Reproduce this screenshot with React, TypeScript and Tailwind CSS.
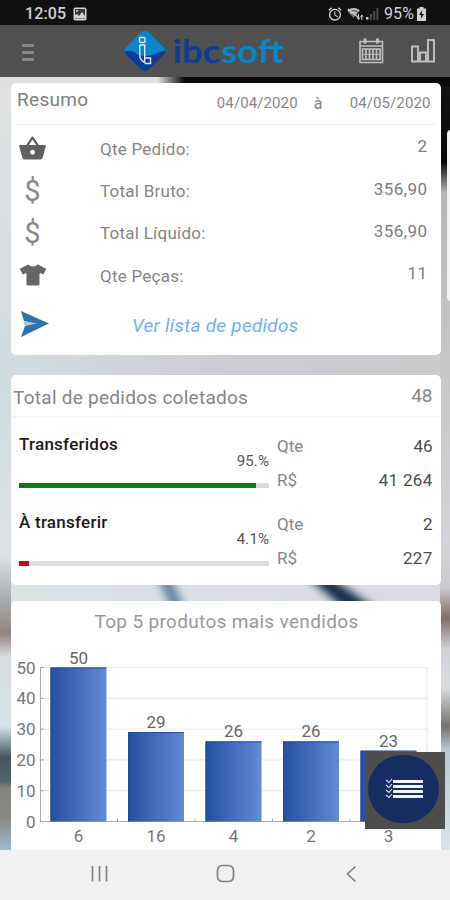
import type { ReactNode } from "react";
import { MdAlarm, MdShoppingBasket } from "react-icons/md";
import { FaTshirt } from "react-icons/fa";

interface SummaryItem { label: string; value: string; icon: ReactNode }
interface Transfer { title: string; pct: string; qty: string; amount: string; width: number; color: string }
interface Product { code: string; count: number }

const DOLLAR = (
  <span className="pt-[2px] text-[29px] leading-none text-[#8a8a8a]">$</span>
);

const SUMMARY: SummaryItem[] = [
  { label: "Qte Pedido:", value: "2", icon: <MdShoppingBasket size={29} color="#606060" /> },
  { label: "Total Bruto:", value: "356,90", icon: DOLLAR },
  { label: "Total Líquido:", value: "356,90", icon: DOLLAR },
  { label: "Qte Peças:", value: "11", icon: <FaTshirt size={26} color="#666" /> },
];

const TRANSFERS: Transfer[] = [
  { title: "Transferidos", pct: "95.%", qty: "46", amount: "41 264", width: 94.6, color: "#0a7d0a" },
  { title: "À transferir", pct: "4.1%", qty: "2", amount: "227", width: 4.1, color: "#b80f0f" },
];

const PRODUCTS: Product[] = [
  { code: "6", count: 50 },
  { code: "16", count: 29 },
  { code: "4", count: 26 },
  { code: "2", count: 26 },
  { code: "3", count: 23 },
];

function StatusBar() {
  return (
    <div className="flex h-[25px] shrink-0 items-center bg-[#111] pl-[25px] pr-[24px] text-[#d2d2d2]">
      <span className="pt-[3px] text-[16px] leading-none font-medium tracking-[0.1px]">12:05</span>
      <svg className="ml-[7px] mt-[2px]" width="14" height="14" viewBox="0 0 14 14">
        <rect x="0.5" y="0.5" width="13" height="13" rx="2" fill="#d2d2d2" />
        <rect x="2" y="2" width="10" height="10" fill="#3a3a3a" />
        <path d="M2 11.500V8l2-1 2 2 3-4 3 4v2.500z" fill="#d2d2d2" />
        <rect x="3" y="3" width="2" height="1.500" fill="#d2d2d2" />
      </svg>
      <div className="ml-auto flex items-center pt-[2px]">
        <MdAlarm size={16} />
        <svg className="ml-[4px]" width="17" height="14" viewBox="0 0 17 14">
          <path d="M0 3.500C4 .3 9 .3 13 3.500L6.500 11z" fill="#777" />
          <path d="M1 4C5 1.200 8.500 1.200 12 4M3 6.500c2.500-1.700 4.500-1.700 7 0M1 2l11 9" fill="none" stroke="#d2d2d2" strokeWidth="1.200" />
          <path d="M11.500 7v5m-1.500-1.500l1.500 2 1.500-2M14.800 13V8.500m-1.300 1.300l1.300-1.800 1.300 1.800" fill="none" stroke="#d2d2d2" />
        </svg>
        <svg className="ml-[2px]" width="13" height="13" viewBox="0 0 13 13">
          <rect x="0" y="10" width="2.500" height="2.500" fill="#d2d2d2" />
          <path d="M4 7h2v6H4zM7.200 4h2v9h-2zM10.400 1h2v12h-2z" fill="#4a4a4a" />
        </svg>
        <span className="ml-[5px] pt-px text-[16px] leading-none tracking-[0.1px]">95%</span>
        <svg className="ml-[3px]" width="9" height="14" viewBox="0 0 9 14">
          <path d="M2.500 0h4v1.500H9V14H0V1.500h2.500z" fill="#d2d2d2" />
          <path d="M5.300 3L2 8h2.200l-.5 4L7 7H4.800z" fill="#111" />
        </svg>
      </div>
    </div>
  );
}

function Logo() {
  return (
    <div className="flex items-center">
      <svg width="44" height="42" viewBox="0 0 44 42">
        <defs>
          <clipPath id="gem">
            <path d="M18 2.500Q22-.8 26 2.500L41 17.500Q44.500 21 41 24.500L26 39.500Q22 42.800 18 39.500L3 24.500Q-.5 21 3 17.500z" />
          </clipPath>
        </defs>
        <g clipPath="url(#gem)">
          <rect width="44" height="42" fill="#0b87c9" />
          <path d="M0 22C5 20 9 20.500 14 24S30 26 36 22l8-2V42H0z" fill="#0d3c92" />
        </g>
        <g fill="none" stroke="#dcebf7" strokeWidth="1.400">
          <rect x="16.500" y="7.500" width="5.500" height="5" rx="1" />
          <path d="M16.700 15h5V28M16.700 15V25q0 5 5 7.500V28h5.800v5.500h-5.800" />
        </g>
      </svg>
      <span className="ml-[6px] origin-left scale-x-[1.11] pb-px font-['Lato'] text-[33px] leading-none font-bold text-[#0d3c92]">
        ibc<span className="text-[#0b84c8]">soft</span>
      </span>
    </div>
  );
}

function AppBar() {
  return (
    <div className="flex h-[52px] shrink-0 items-center bg-[#505050] pl-[22px] pr-[15px]">
      <div className="flex w-[101px] flex-col gap-[4px] pt-[2px]">
        <span className="h-[3px] w-[12px] bg-[#888]" />
        <span className="h-[3px] w-[12px] bg-[#888]" />
        <span className="h-[3px] w-[12px] bg-[#888]" />
      </div>
      <Logo />
      <div className="ml-auto flex items-center gap-[27px]">
        <svg width="25" height="26" viewBox="0 0 25 26" fill="none" stroke="#c0c0c0" strokeWidth="1.600">
          <path d="M1 3.500h22.500V24.500H1zM1 8h22.500" />
          <path d="M6 .5v5M18.500 .5v5" strokeWidth="3" />
          <path d="M3.500 11h17.500v10.500H3.500zM7 11V22M10.500 11V22M14 11V22M17.500 11V22" strokeWidth="1.700" />
          <path d="M4 16.300h17" strokeWidth="1" />
        </svg>
        <svg width="24" height="24" viewBox="0 0 24 24" fill="none" stroke="#c0c0c0" strokeWidth="1.900">
          <path d="M1 7.500h6V22.500H1zM9 13.500h6v9H9zM17 1h6v21.500h-6z" />
        </svg>
      </div>
    </div>
  );
}

function SummaryCard() {
  return (
    <section className="flex h-[272px] shrink-0 flex-col rounded-[5px] bg-white text-[#808080]">
      <header className="mx-[6px] flex h-[42px] items-center border-b border-[#f0f0f0] pr-[4px]">
        <h2 className="pb-[6px] text-[19px] font-normal tracking-[0.3px]">Resumo</h2>
        <div className="ml-auto flex text-[15px] tracking-[0.1px] text-[#868686]">
          <span>04/04/2020</span>
          <span className="w-[52px] pl-[16px] text-[16px]">à</span>
          <span>04/05/2020</span>
        </div>
      </header>
      <div className="pt-[2px]">
        {SUMMARY.map((item) => (
          <div key={item.label} className="flex h-[42.300px] items-center pr-[13px]">
            <div className="flex w-[43px] justify-center">{item.icon}</div>
            <span className="ml-[46px] pt-[3px] text-[17px] tracking-[0.25px] text-[#858585]">{item.label}</span>
            <span className="ml-auto pb-[2px] text-[17px] tracking-[0.45px] text-[#7c7c7c]">{item.value}</span>
          </div>
        ))}
      </div>
      <div className="flex h-[54px] items-center pl-[10px]">
        <svg className="mt-[2px]" width="28" height="26" viewBox="0 0 28 26">
          <path d="M0 0L28 12.500 0 26l4-11 10-2.500L3 10z" fill="#2f73ad" />
          <path d="M2.500 10.500L17 12.500 4 14.500z" fill="#a9c5de" />
        </svg>
        <a className="ml-[83px] pt-[6px] text-[19px] italic tracking-[0.250px] text-[#70b2f3]">Ver lista de pedidos</a>
      </div>
    </section>
  );
}

function TransferRow({ item }: { item: Transfer }) {
  return (
    <div className="flex h-[78px] pl-[8px] pr-[8px]">
      <div className="w-[250px]">
        <h3 className="pt-px text-[17px] leading-[20px] font-medium tracking-[0.250px] text-[#1a1a1a]">{item.title}</h3>
        <p className="-mt-[3px] text-right text-[15px] leading-[20px] tracking-[0.1px] text-[#555]">{item.pct}</p>
        <div className="mt-[12px] h-[5px] bg-[#dcdcdc]">
          <div className="h-full" style={{ width: `${item.width}%`, background: item.color }} />
        </div>
      </div>
      <dl className="ml-[8px] flex-1 pt-[3px] text-[17px] leading-[20px] text-[#4c4c4c]">
        <div className="flex h-[34px] justify-between">
          <dt className="text-[#858585]">Qte</dt>
          <dd>{item.qty}</dd>
        </div>
        <div className="flex justify-between">
          <dt className="text-[#858585]">R$</dt>
          <dd className="tracking-[0.3px]">{item.amount}</dd>
        </div>
      </dl>
    </div>
  );
}

function TransferCard() {
  return (
    <section className="h-[210px] shrink-0 rounded-[5px] bg-white text-[#858585]">
      <header className="mx-[2px] flex h-[42px] items-center justify-between border-b border-[#f0f0f0] pr-[6px]">
        <h2 className="pt-[5px] text-[19px] tracking-[0.270px]">Total de pedidos coletados</h2>
        <span className="pt-px text-[19px]">48</span>
      </header>
      <div className="pt-[16px]">
        {TRANSFERS.map((item) => <TransferRow key={item.title} item={item} />)}
      </div>
    </section>
  );
}

function TopProductsChart() {
  const left = 29.5;
  const base = 220.5;
  const step = 77.5;
  const scale = 3.08;

  return (
    <svg className="block" width="430" height="249" viewBox="0 0 430 249">
      <defs>
        <linearGradient id="bar">
          <stop offset="0" stopColor="#254f9e" />
          <stop offset="1" stopColor="#648ad6" />
        </linearGradient>
      </defs>
      {[0, 10, 20, 30, 40, 50].map((tick) => {
        const y = base - tick * scale;
        return (
          <g key={tick}>
            <path d={`M${left} ${y}H416`} stroke={tick ? "#e8e8e8" : "#aaa"} />
            <path d={`M${left} ${y}h3`} stroke="#999" />
            <text x="24.500" y={y + 6} textAnchor="end" fontSize="17" fill="#757575">{tick}</text>
          </g>
        );
      })}
      <path d={`M${left} ${base}V66`} stroke="#aaa" />
      <path d={`M416 ${base}V66`} stroke="#e4e4e4" />
      {PRODUCTS.map((p, i) => {
        const x = 39.500 + i * step;
        const h = p.count * scale;
        return (
          <g key={p.code}>
            <rect x={x} y={base - h} width="56" height={h} fill="url(#bar)" />
            <path d={`M${x + 0.5} ${base}V${base - h + 0.5}h55.500`} fill="none" stroke="#1d4ba3" />
            <path d={`M${x + 67} ${base}v-3`} stroke="#aaa" />
            <text x={x + 28} y={base - h - 4} textAnchor="middle" fontSize="17" fill="#666">{p.count}</text>
            <text x={x + 28} y="241" textAnchor="middle" fontSize="17" fill="#757575">{p.code}</text>
          </g>
        );
      })}
      <text x="215.500" y="27" textAnchor="middle" fontSize="19" letterSpacing="0.33" fill="#999">
        Top 5 produtos mais vendidos
      </text>
    </svg>
  );
}

// Out-of-focus photo behind the cards
function Backdrop() {
  return (
    <svg className="absolute inset-0" width="450" height="773" viewBox="0 77 450 773">
      <defs>
        <linearGradient id="sky" x2="1">
          <stop offset="0" stopColor="#d2dde0" />
          <stop offset="0.45" stopColor="#cfced6" />
          <stop offset="1" stopColor="#ccc9cc" />
        </linearGradient>
        <linearGradient id="edgeL" x2="0" y2="1">
          <stop offset="0" stopColor="#dfe1e2" />
          <stop offset="0.3" stopColor="#d7dcdf" />
          <stop offset="0.36" stopColor="#cddbdf" />
          <stop offset="0.62" stopColor="#dde1e4" />
          <stop offset="0.68" stopColor="#a5a7a8" />
          <stop offset="0.72" stopColor="#93847f" />
          <stop offset="0.75" stopColor="#d8dcde" />
          <stop offset="0.84" stopColor="#d5e2e6" />
          <stop offset="0.88" stopColor="#465761" />
          <stop offset="0.91" stopColor="#55626a" />
          <stop offset="0.92" stopColor="#85817d" />
          <stop offset="0.96" stopColor="#8b8a88" />
          <stop offset="1" stopColor="#a3bccd" />
        </linearGradient>
        <linearGradient id="edgeR" x2="0" y2="1">
          <stop offset="0" stopColor="#151515" />
          <stop offset="0.11" stopColor="#050505" />
          <stop offset="0.15" stopColor="#b7b7b7" />
          <stop offset="0.37" stopColor="#c7c7c7" />
          <stop offset="0.6" stopColor="#d3d3d9" />
          <stop offset="0.66" stopColor="#cbcbd0" />
          <stop offset="0.7" stopColor="#806c68" />
          <stop offset="0.74" stopColor="#cfd3d8" />
          <stop offset="0.79" stopColor="#d8dcdf" />
          <stop offset="0.84" stopColor="#77726d" />
          <stop offset="0.87" stopColor="#b9c8d2" />
          <stop offset="1" stopColor="#d7e4eb" />
        </linearGradient>
        <linearGradient id="topEdge">
          <stop offset="0.35" stopColor="#dedede" />
          <stop offset="0.41" stopColor="#0a0a0a" />
        </linearGradient>
        <linearGradient id="low">
          <stop offset="0" stopColor="#dce2e5" />
          <stop offset="1" stopColor="#dadae1" />
        </linearGradient>
        <filter id="soft" x="-50%" y="-50%" width="200%" height="200%">
          <feGaussianBlur stdDeviation="4" />
        </filter>
      </defs>
      <rect y="77" width="450" height="773" fill="url(#sky)" />
      <rect y="560" width="450" height="60" fill="url(#low)" />
      <rect y="77" width="11" height="773" fill="url(#edgeL)" />
      <rect x="440" y="77" width="10" height="773" fill="url(#edgeR)" />
      <rect y="77" width="450" height="10" fill="url(#topEdge)" />
      <path d="M156 575h14l16 36h-14z" fill="#6784a2" filter="url(#soft)" />
      <path d="M305 575h22l52 36h-32z" fill="#15294a" filter="url(#soft)" />
      <rect x="447" y="130" width="10" height="171" rx="4" fill="#f3f3f3" />
    </svg>
  );
}

function ListButton() {
  return (
    <button className="absolute top-[675px] left-[365px] flex h-[77px] w-[80px] items-center justify-center bg-[#4d4d4d] pb-[3px] pr-[3px]">
      <span className="flex h-[68px] w-[71px] items-center justify-center rounded-full bg-[#172d61]">
        <svg width="38" height="22" viewBox="0 0 38 22">
          {[2, 7, 12, 17].map((y) => (
            <g key={y}>
              <rect x="8" y={y} width="30" height="3" fill="#f2f5fb" />
              <path d={`M1 ${y}l3 2.500 3-3.500`} fill="none" stroke="#dfe6f3" strokeWidth="1.100" />
            </g>
          ))}
        </svg>
      </span>
    </button>
  );
}

function NavBar() {
  return (
    <nav className="flex h-[50px] shrink-0 items-center bg-[#f1f1f1] pl-[91px] pr-[92px] pb-[2px]">
      <svg width="267" height="20" viewBox="0 0 267 20" fill="none" stroke="#808080" strokeWidth="1.700">
        <path d="M1.500 2v15.500M8.500 2v15.500M15.500 2v15.500" />
        <rect x="126.500" y="1.500" width="16" height="16" rx="5" />
        <path d="M264.500 2.500l-8 7.500 8 7.500" />
      </svg>
    </nav>
  );
}

export default function App() {
  return (
    <div className="flex h-[900px] w-[450px] flex-col overflow-hidden font-['Roboto',sans-serif]">
      <StatusBar />
      <AppBar />
      <main className="relative h-[773px] shrink-0 overflow-hidden">
        <Backdrop />
        <div className="relative flex flex-col pt-[6px] pr-[9.500px] pl-[11px]">
          <SummaryCard />
          <div className="mt-[20px]">
            <TransferCard />
          </div>
          <section className="mt-[16px] h-[249px] overflow-hidden rounded-t-[5px] bg-white">
            <TopProductsChart />
          </section>
        </div>
        <ListButton />
      </main>
      <NavBar />
    </div>
  );
}
